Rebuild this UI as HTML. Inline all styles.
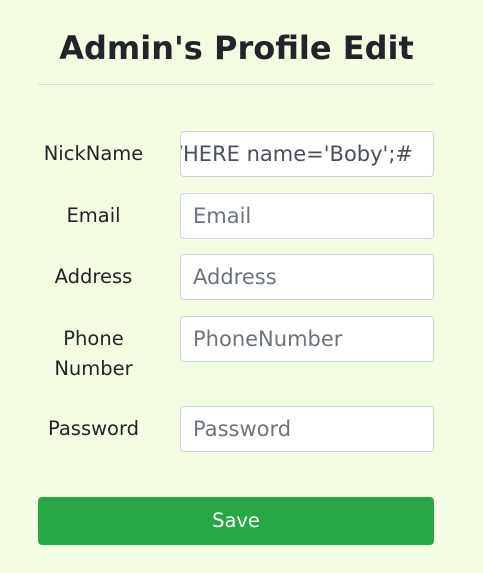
<!DOCTYPE html>
<html><head><meta charset="utf-8"><style>
body{margin:0;background:#f3fde4;font-family:"DejaVu Sans","Liberation Sans",sans-serif;color:#212529;width:483px;height:573px;position:relative;overflow:hidden}
h1{position:absolute;left:0;width:473px;top:29px;margin:0;text-align:center;font-size:32px;font-weight:bold;line-height:38px}
.hr{position:absolute;left:38px;width:396px;top:84px;border-top:1px solid #d9dcd3}
.lbl{position:absolute;left:38px;width:111px;text-align:center;font-size:19.5px;line-height:30px}
.in{position:absolute;left:180px;width:252px;height:44px;background:#fff;border:1px solid #ced4da;border-radius:4px;overflow:hidden;font-size:21px;line-height:44px;color:#6c757d;box-sizing:content-box}
.in span{position:absolute;left:12px;white-space:nowrap}
.in .v{left:auto;right:20px;color:#495057}
.btn{position:absolute;left:38px;top:497px;width:396px;height:48px;background:#28a745;border-radius:4px;color:#fff;font-size:19.5px;line-height:48px;text-align:center}
</style></head><body>
<h1>Admin's Profile Edit</h1>
<div class="hr"></div>
<div class="lbl" style="top:139px">NickName</div>
<div class="in" style="top:131px"><span class="v">WHERE name='Boby';#</span></div>
<div class="lbl" style="top:201px">Email</div>
<div class="in" style="top:193px"><span>Email</span></div>
<div class="lbl" style="top:262px">Address</div>
<div class="in" style="top:254px"><span>Address</span></div>
<div class="lbl" style="top:324px">Phone<br>Number</div>
<div class="in" style="top:316px"><span>PhoneNumber</span></div>
<div class="lbl" style="top:414px">Password</div>
<div class="in" style="top:406px"><span>Password</span></div>
<div class="btn">Save</div>
</body></html>
